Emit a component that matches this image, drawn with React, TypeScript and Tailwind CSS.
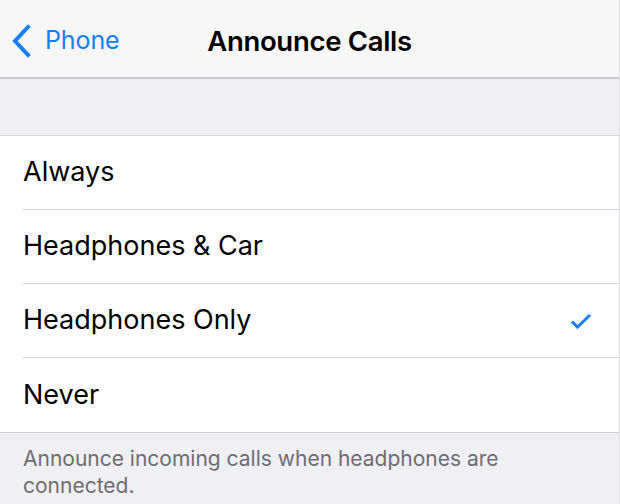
const options = ['Always', 'Headphones & Car', 'Headphones Only', 'Never'];
const selected = 'Headphones Only';

export default function App() {
  return (
    <div
      className="w-[620px] h-[504px] overflow-hidden bg-[#efeff4] border-r border-[#dedee2]"
      style={{ fontFamily: 'Inter, "Noto Sans", sans-serif' }}
    >
      {/* Nav bar */}
      <div className="relative h-[79px] bg-[#f7f7f8] border-b-2 border-[#c9c9cd] flex items-center">
        <button className="flex items-center gap-[14px] pl-[11px] pt-[4px] text-[#157efb]">
          <svg width="20" height="34" viewBox="0 0 20 34" fill="none">
            <path d="M17 3 L4 17 L17 31" stroke="#157efb" strokeWidth="4" strokeLinecap="square" />
          </svg>
          <span className="text-[25px] leading-none tracking-[-0.1px]">Phone</span>
        </button>
        <h1 className="absolute left-0 right-0 text-center text-[27.5px] font-semibold text-black tracking-[-0.3px] leading-none top-[28px]">
          Announce Calls
        </h1>
      </div>

      {/* Section spacer */}
      <div className="h-[57px] border-b border-[#d8d8dc]" />

      {/* Options */}
      <div className="bg-white border-b border-[#d0d0d4]">
        {options.map((opt, i) => (
          <div key={opt} className="pl-[23px]">
            <div
              className={`h-[74px] flex items-center justify-between pr-[27px] ${
                i < options.length - 1 ? 'border-b border-[#d6d6da]' : ''
              }`}
            >
              <span className="text-[27px] text-black tracking-[0px]">{opt}</span>
              {opt === selected && (
                <svg width="22" height="16" viewBox="0 0 22 16" fill="none">
                  <path d="M2 8.5 L7.5 14 L20 2" stroke="#157efb" strokeWidth="3" />
                </svg>
              )}
            </div>
          </div>
        ))}
      </div>

      {/* Footer */}
      <p className="px-[23px] pt-[12px] text-[21px] leading-[27px] text-[#6d6d72] w-[540px]">
        Announce incoming calls when headphones are connected.
      </p>
    </div>
  );
}
